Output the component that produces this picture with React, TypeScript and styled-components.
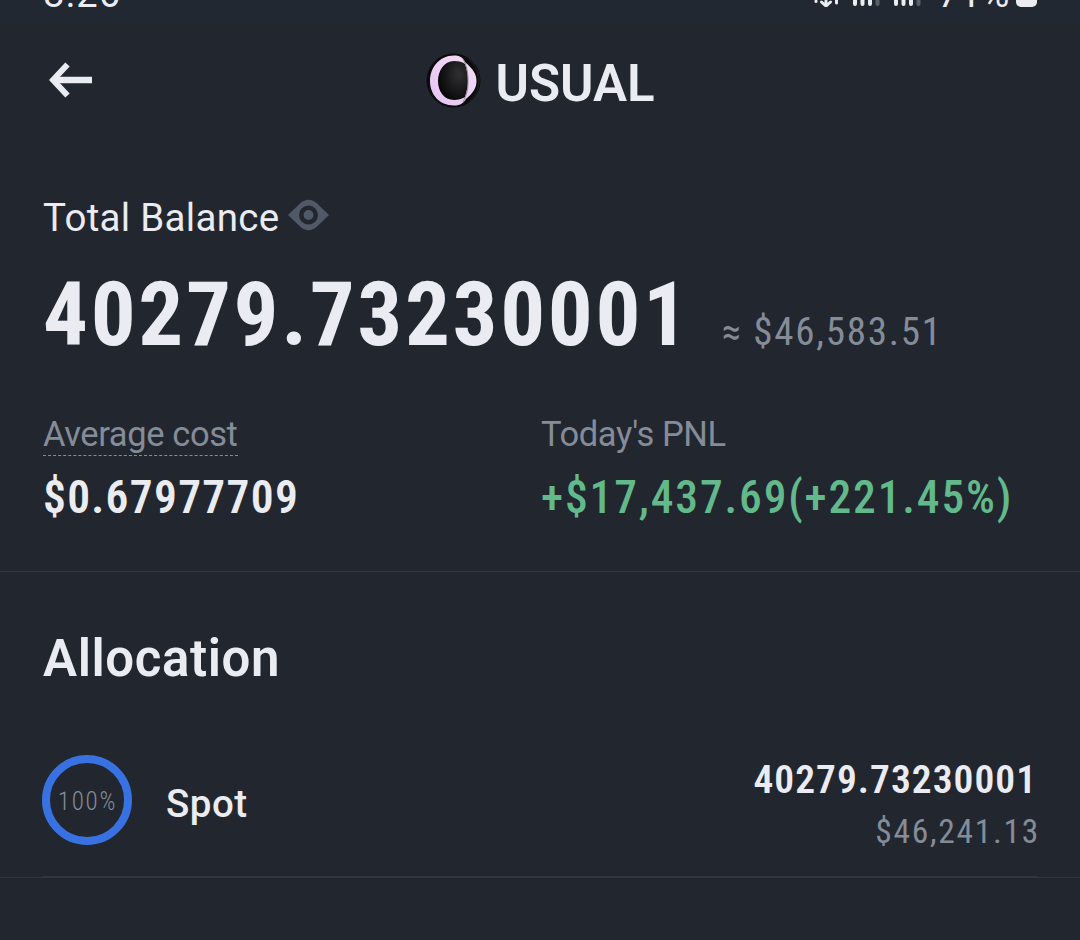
import React from "react";
import styled, { createGlobalStyle } from "styled-components";

const colors = {
  background: "#22262f",
  statusBar: "#212831",
  text: "#eaecf1",
  muted: "#848c98",
  icon: "#505967",
  green: "#62b98b",
  blue: "#3872e2",
  divider: "#2f3a46",
  rowDivider: "#303641",
};

interface TextProps {
  $size: number;
  $line: number;
  $weight?: number;
  $color?: string;
  $spacing?: number;
}

const App: React.FunctionComponent = () => (
  <>
    <GlobalStyle />
    <Screen>
      <StatusBar>
        <Text $size={38} $line={40} $spacing={1.3}>
          8:26
        </Text>
        <StatusIcons>
          <NetworkIcon />
          <SignalIcon />
          <SignalIcon />
          <StatusPercent $size={38} $line={40} $spacing={0.6}>
            71%
          </StatusPercent>
          <Battery />
        </StatusIcons>
      </StatusBar>

      <Header>
        <BackIcon />
        <Title>
          <UsualLogo />
          <CoinName as="h1" $size={51} $line={60} $weight={600}>
            USUAL
          </CoinName>
        </Title>
      </Header>

      <Summary>
        <LabelRow>
          <Text $size={38.5} $line={48} $spacing={0.3}>
            Total Balance
          </Text>
          <EyeIcon />
        </LabelRow>
        <BalanceRow>
          <NumberText $size={89} $line={100} $weight={700} $spacing={2.65}>
            40279.73230001
          </NumberText>
          <NumberText $size={39} $line={50} $color={colors.muted} $spacing={1.75}>
            ≈ $46,583.51
          </NumberText>
        </BalanceRow>
        <Stats>
          <Stat>
            <DashedLabel $size={34.5} $line={41} $color={colors.muted} $spacing={-0.4}>
              Average cost
            </DashedLabel>
            <NumberText $size={45.5} $line={50} $weight={600} $spacing={1.3}>
              $0.67977709
            </NumberText>
          </Stat>
          <Stat>
            <StatLabel $size={34.5} $line={41} $color={colors.muted} $spacing={-0.4}>
              Today's PNL
            </StatLabel>
            <NumberText
              $size={45.5}
              $line={50}
              $weight={500}
              $color={colors.green}
              $spacing={1.85}
            >
              +$17,437.69(+221.45%)
            </NumberText>
          </Stat>
        </Stats>
      </Summary>

      <Allocation>
        <Text as="h2" $size={51} $line={60} $weight={600} $spacing={0.6}>
          Allocation
        </Text>
        <AllocationRow>
          <Ring>
            <NumberText $size={25} $line={30} $weight={300} $color={colors.muted} $spacing={1.8}>
              100%
            </NumberText>
          </Ring>
          <RowName $size={38.5} $line={48} $weight={500} $spacing={0.5}>
            Spot
          </RowName>
          <Amounts>
            <CoinAmount $size={39.5} $line={48} $weight={600} $spacing={1}>
              40279.73230001
            </CoinAmount>
            <FiatAmount $size={33.5} $line={44} $color={colors.muted} $spacing={1.7}>
              $46,241.13
            </FiatAmount>
          </Amounts>
        </AllocationRow>
      </Allocation>
    </Screen>
  </>
);

const NetworkIcon = () => (
  <svg width="27" height="30" viewBox="0 0 27 30" fill="none">
    <path d="M3 24v0.5M23.500 14v12" stroke={colors.text} strokeWidth="3" strokeLinecap="round" />
    <path d="M13 12v16M8.500 25l4.500 4 4.500-4" stroke={colors.text} strokeWidth="3" strokeLinecap="round" />
  </svg>
);

const SignalIcon = () => (
  <svg width="28" height="30" viewBox="0 0 28 30" strokeWidth="4" strokeLinecap="round">
    <path d="M2 22v5M9.500 16v11M17 10v17" stroke={colors.text} />
    <path d="M24.500 4v23" stroke="#59606a" />
  </svg>
);

const BackIcon = () => (
  <svg width="44" height="38" viewBox="0 0 44 38" fill="none">
    <path d="M18.500 2.500L4 18l14.500 15.500" stroke={colors.text} strokeWidth="6" />
    <path d="M5 18h38" stroke={colors.text} strokeWidth="6.500" />
  </svg>
);

const UsualLogo = () => (
  <svg width="56" height="56" viewBox="0 0 56 56">
    <defs>
      <radialGradient id="disc" cx="0.7" cy="0.35" r="0.7">
        <stop offset="0" stopColor="#303032" />
        <stop offset="1" stopColor="#09090b" />
      </radialGradient>
      <linearGradient id="crescent" x1="1" y1="0" x2="0" y2="1">
        <stop offset="0" stopColor="#f6def6" />
        <stop offset="1" stopColor="#e4c3f1" />
      </linearGradient>
    </defs>
    <circle cx="28.500" cy="27.500" r="27" fill="#0b0b0e" />
    <path d="M41 4A27 27 0 0 1 41 51C50 43 53 36 53 28S50 12 41 4z" fill="#1c1c1f" />
    <path
      d="M29 2.500C34 2.500 38 4 40 9C48 16 51.500 21 51.500 28S48 40 41 46C38 51 34 52.500 29 52.500C14 52.500 5 41 5 28S14 2.500 29 2.500z"
      fill="url(#crescent)"
    />
    <path
      d="M29 8C34 8 38 9 40 11C42 17 43 22 43 28S42 37 40 44C37 46 33 47 29 47C19 47 13 38 13 28S19 8 29 8z"
      fill="url(#disc)"
    />
    <path d="M38 6C42 13 43 20 43 28S42 41 38 49" fill="none" stroke="#8f8992" strokeWidth="1" />
  </svg>
);

const EyeIcon = () => (
  <svg width="41" height="38" viewBox="0 0 41 38">
    <path
      d="M0 16L12 4.500Q20.500-3 29 4.500L41 16 29 27.500Q20.500 35 12 27.500z"
      fill={colors.icon}
    />
    <circle cx="20.500" cy="16" r="7.200" fill={colors.icon} stroke={colors.background} strokeWidth="4.500" />
  </svg>
);

const GlobalStyle = createGlobalStyle`
  body {
    margin: 0;
    background-color: ${colors.background};
  }
`;

const Screen = styled.main`
  width: 1080px;
  height: 940px;
  overflow: hidden;
  background-color: ${colors.background};
  color: ${colors.text};
  font-family: Roboto, "Liberation Sans", sans-serif;
`;

const Text = styled.div<TextProps>`
  margin: 0;
  font-size: ${({ $size }) => $size}px;
  line-height: ${({ $line }) => $line}px;
  font-weight: ${({ $weight = 400 }) => $weight};
  color: ${({ $color = colors.text }) => $color};
  letter-spacing: ${({ $spacing = 0 }) => $spacing}px;
  white-space: nowrap;
`;

const NumberText = styled(Text)`
  font-stretch: 87%;
`;

const StatusBar = styled.div`
  display: flex;
  justify-content: space-between;
  align-items: flex-end;
  box-sizing: border-box;
  height: 23px;
  padding: 0 43px 9px;
  overflow: hidden;
  background-color: ${colors.statusBar};
`;

const StatusIcons = styled.div`
  display: flex;
  align-items: flex-end;
  gap: 13px;

  svg {
    margin-bottom: 7px;
  }
`;

const StatusPercent = styled(Text)`
  margin-left: 3px;
`;

const Battery = styled.div`
  width: 21px;
  height: 36px;
  margin: 0 0 7px -7px;
  border-radius: 5px;
  background-color: ${colors.text};
`;

const Header = styled.header`
  display: grid;
  grid-template-columns: 1fr auto 1fr;
  align-items: center;
  height: 116px;
  padding: 0 49px;
`;

const Title = styled.div`
  display: flex;
  align-items: center;
  gap: 14px;
`;

const CoinName = styled(Text)`
  padding-top: 6px;
`;

const Summary = styled.section`
  box-sizing: border-box;
  height: 433px;
  padding: 55px 43px 0;
  border-bottom: 1px solid ${colors.divider};
`;

const LabelRow = styled.div`
  display: flex;
  align-items: center;
  gap: 9px;
`;

const BalanceRow = styled.div`
  display: flex;
  align-items: baseline;
  gap: 31px;
  margin-top: 23px;
`;

const Stats = styled.div`
  display: grid;
  grid-template-columns: 498px 1fr;
  margin-top: 49px;
`;

const Stat = styled.div`
  display: flex;
  flex-direction: column;
  align-items: flex-start;
`;

const StatLabel = styled(Text)`
  margin-bottom: 18px;
`;

const DashedLabel = styled(StatLabel)`
  margin-bottom: 17px;
  border-bottom: 1px dashed ${colors.muted};
`;

const Allocation = styled.section`
  padding-top: 57px;
  border-bottom: 1px solid ${colors.rowDivider};

  h2 {
    margin-left: 43px;
  }
`;

const AllocationRow = styled.div`
  display: flex;
  align-items: center;
  box-sizing: border-box;
  height: 153px;
  margin: 35px 42px 0;
  border-bottom: 1px solid ${colors.rowDivider};
`;

const Ring = styled.div`
  display: flex;
  align-items: center;
  justify-content: center;
  box-sizing: border-box;
  width: 90px;
  height: 90px;
  padding: 3px 0 0 1px;
  border: 8px solid ${colors.blue};
  border-radius: 50%;
`;

const RowName = styled(Text)`
  margin: 8px 0 0 34px;
`;

const Amounts = styled.div`
  display: flex;
  flex-direction: column;
  align-items: flex-end;
  margin: 9px 0 0 auto;
`;

const CoinAmount = styled(NumberText)`
  margin: 0 1px 6px 0;
`;

const FiatAmount = styled(NumberText)`
  margin-right: -2px;
`;

export default App;
